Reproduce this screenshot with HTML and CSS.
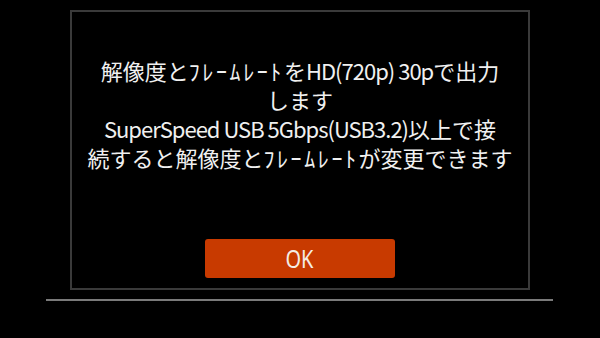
FILE: index.html
```html
<!DOCTYPE html>
<html lang="ja">
<head>
<meta charset="utf-8">
<link rel="stylesheet" href="styles.css">
</head>
<body>
<div class="screen">
  <div class="dialog">
    <p class="message">解像度と<span class="kana">ﾌﾚｰﾑﾚｰﾄ</span>を<span class="lat">HD(720p) 30p</span>で出力<br>します<br><span class="lat">SuperSpeed USB 5Gbps(USB3.2)</span>以上で接<br>続すると解像度と<span class="kana">ﾌﾚｰﾑﾚｰﾄ</span>が変更できます</p>
    <button class="ok"><span class="ok-label">OK</span></button>
  </div>
  <div class="rule"></div>
</div>
</body>
</html>
```
FILE: styles.css
```css
html, body {
  margin: 0;
  padding: 0;
  background: #000;
}
.screen {
  width: 600px;
  height: 338px;
  background: #000;
  display: flex;
  flex-direction: column;
  align-items: flex-start;
  padding-top: 10px;
  box-sizing: border-box;
}
.dialog {
  margin-left: 70px;
  width: 460px;
  height: 280px;
  box-sizing: border-box;
  border: 2px solid #3a3a3a;
  display: flex;
  flex-direction: column;
  align-items: center;
  padding-top: 44px;
}
.message {
  margin: 0;
  color: #f0f0f0;
  font-family: "Noto Sans CJK JP", "DejaVu Sans", sans-serif;
  font-size: 22px;
  line-height: 29px;
  text-align: center;
  white-space: nowrap;
}
.kana {
  letter-spacing: 2.6px;
}
.lat {
  letter-spacing: -1px;
}
.ok {
  margin-top: 67px;
  width: 190px;
  height: 39px;
  border: none;
  border-radius: 3px;
  background: #c83a00;
  color: #f4ece4;
  font-family: "Noto Sans", sans-serif;
  font-size: 25px;
  line-height: 39px;
  padding: 0;
}
.ok-label {
  display: inline-block;
  transform: scaleX(0.8);
}
.rule {
  margin-top: 9px;
  margin-left: 46px;
  width: 507px;
  height: 2px;
  background: #7a7a7a;
}
```
